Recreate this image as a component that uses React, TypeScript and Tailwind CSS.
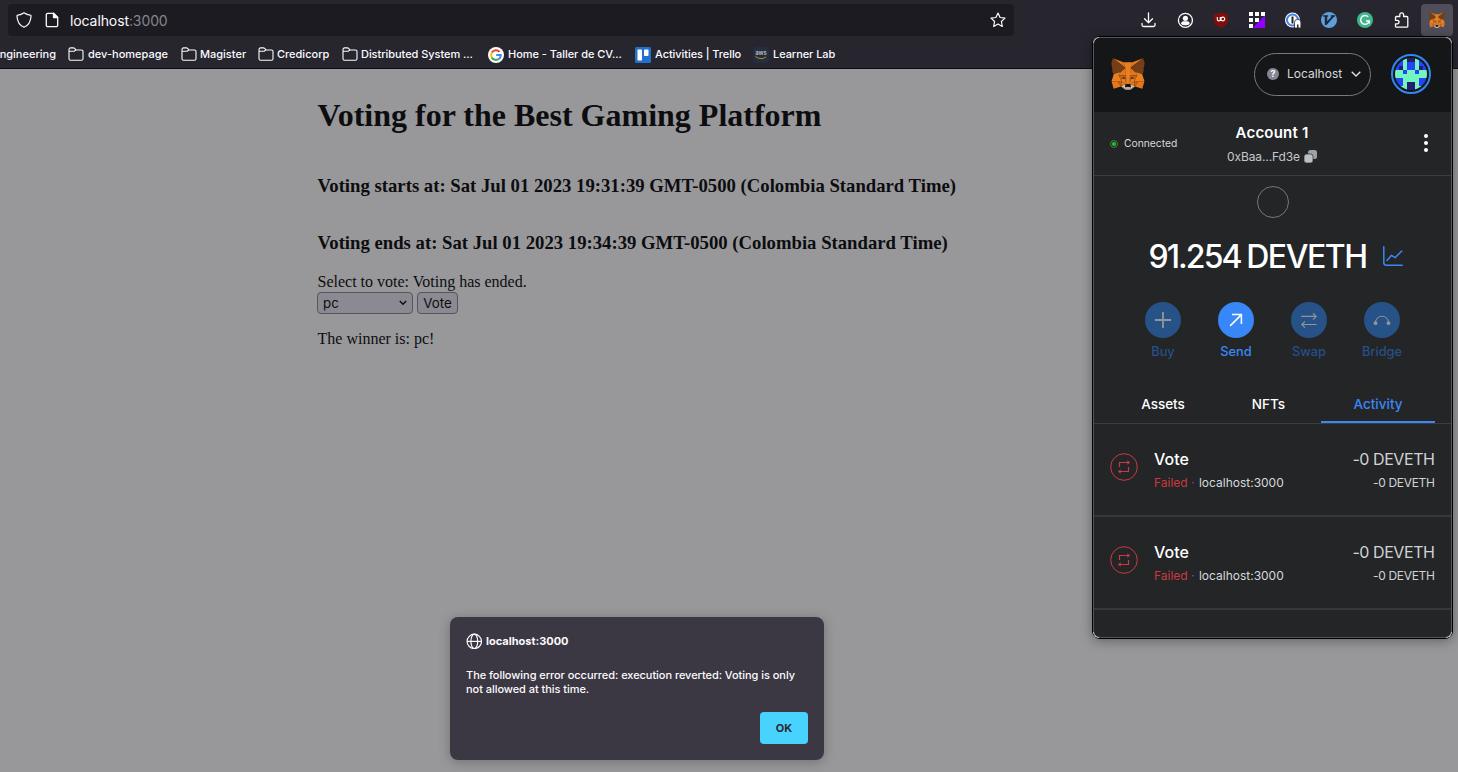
import React from "react";

const Fox = ({ className }: { className: string }) => (
  <svg viewBox="30 34 259 239" preserveAspectRatio="none" className={className}>
    <g fill="#e4761b">
      <path d="M274.1 35.5 174.6 109.4 193 65.8zM44.4 35.5 143.1 110.1 125.6 65.8zM238.3 206.8 211.8 247.4 268.5 263 284.8 207.7zM33.9 207.7 50.1 263 106.8 247.4 80.3 206.8z" />
      <path d="M103.6 138.2 87.8 162.1 144.1 164.6 142.1 104.1zM214.9 138.2 175.9 103.4 174.6 164.6 230.8 162.1zM106.8 247.4 140.6 230.9 111.4 208.1zM177.9 230.9 211.8 247.4 207.1 208.1z" />
    </g>
    <path fill="#d7c1b3" d="M211.8 247.4 177.9 230.9 180.6 253 180.3 262.3zM106.8 247.4 138.3 262.3 138.1 253 140.6 230.9z" />
    <path fill="#233447" d="M138.8 193.5 110.6 185.2 130.5 176.1zM179.7 193.5 188 176.1 208 185.2z" />
    <path fill="#cd6116" d="M106.8 247.4 111.6 206.8 80.3 207.7zM207 206.8 211.8 247.4 238.3 207.7zM230.8 162.1 174.6 164.6 179.8 193.5 188.1 176.1 208.1 185.2zM110.6 185.2 130.6 176.1 138.8 193.5 144.1 164.6 87.8 162.1z" />
    <path fill="#e4751f" d="M87.8 162.1 111.4 208.1 110.6 185.2zM208.1 185.2 207.1 208.1 230.8 162.1zM144.1 164.6 138.8 193.5 145.4 227.6 146.9 182.7zM174.6 164.6 171.9 182.6 173.1 227.6 179.8 193.5z" />
    <path fill="#e8801f" d="M179.8 193.5 173.1 227.6 177.9 230.9 207.1 208.1 208.1 185.2zM110.6 185.2 111.4 208.1 140.6 230.9 145.4 227.6 138.8 193.5z" />
    <path fill="#c0ad9e" d="M180.3 262.3 180.6 253 178.1 250.8 140.4 250.8 138.1 253 138.3 262.3 106.8 247.4 117.8 256.4 140.1 271.9 178.4 271.9 200.8 256.4 211.8 247.4z" />
    <path fill="#161616" d="M177.9 230.9 173.1 227.6 145.4 227.6 140.6 230.9 138.1 253 140.4 250.8 178.1 250.8 180.6 253z" />
    <path fill="#763d16" d="M278.3 114.2 286.8 73.4 274.1 35.5 177.9 106.9 214.9 138.2 267.2 153.5 278.8 140 273.8 136.4 281.8 129.1 275.6 124.3 283.6 118.2zM31.8 73.4 40.3 114.2 34.9 118.2 42.9 124.3 36.8 129.1 44.8 136.4 39.8 140 51.3 153.5 103.6 138.2 140.6 106.9 44.4 35.5z" />
    <path fill="#e8801f" d="M267.2 153.5 214.9 138.2 230.8 162.1 207.1 208.1 238.3 207.7 284.8 207.7zM103.6 138.2 51.3 153.5 33.9 207.7 80.3 207.7 111.4 208.1 87.8 162.1zM174.6 164.6 177.9 106.9 193.1 65.8 125.6 65.8 140.6 106.9 144.1 164.6 145.3 182.8 145.4 227.6 173.1 227.6 173.3 182.8z" />
  </svg>
);

const Folder = () => (
  <svg viewBox="0 0 16 16" className="size-4 shrink-0" fill="none" stroke="#fbfbfe" strokeWidth="1.1">
    <path d="M1 11.800V2.400A1.500 1.500 0 0 1 2.500.900h2.900c.5 0 .9.2 1.200.5l1.200 1.200c.2.2.5.4.8.4h4.900A1.500 1.500 0 0 1 15 4.500v7.300a1.500 1.500 0 0 1-1.500 1.500h-11A1.500 1.500 0 0 1 1 11.800zM1 4.300h5.200l1.600-1.300" />
  </svg>
);

const Slot = ({ children }: { children: React.ReactNode }) => (
  <div className="flex size-8 items-center justify-center">{children}</div>
);

const Toolbar = () => (
  <div className="flex gap-1">
    <Slot>
      <svg viewBox="0 0 16 16" className="size-4" fill="none" stroke="#fbfbfe" strokeWidth="1.3" strokeLinecap="round" strokeLinejoin="round">
        <path d="M7.500.800v9.700M3.500 6.800l4 4 4-4M1 11.500V13a1.500 1.500 0 0 0 1.500 1.500h10A1.500 1.500 0 0 0 14 13v-1.500" />
      </svg>
    </Slot>
    <Slot>
      <svg viewBox="0 0 16 16" className="size-4">
        <circle cx="8.400" cy="8.300" r="7" fill="none" stroke="#fbfbfe" strokeWidth="1.300" />
        <circle cx="8.400" cy="6.300" r="2.600" fill="#fbfbfe" />
        <path d="M4 12c.2-2 1.200-2.700 2.400-2.700h4c1.200 0 2.200.7 2.400 2.700a6 6 0 0 1-4.400 1.300A6 6 0 0 1 4 12z" fill="#fbfbfe" />
      </svg>
    </Slot>
    <Slot>
      <svg viewBox="0 0 16 16" className="size-4">
        <path d="M8 0c2 1.300 4 2 7 2.100v5.400C15 11.500 12.500 14 8 16 3.500 14 1 11.500 1 7.500V2.100C4 2 6 1.300 8 0z" fill="#800f0b" />
        <path d="M4.300 5v2.400a1.500 1.500 0 0 0 3 0V5M7.300 5v4M9.800 5.100a1.900 1.900 0 1 1 0 3.800 1.900 1.900 0 0 1 0-3.800z" fill="none" stroke="#fff" strokeWidth="1.100" />
      </svg>
    </Slot>
    <Slot>
      <svg viewBox="0 0 16 16" className="size-4">
        <path d="M0 0h4v4H0zM6 0h4v4H6zM12 0h4v4h-4zM0 6h4v4H0zM6 6h4v4H6zM0 12h4v4H0z" fill="#fff" />
        <path d="M16 3.500V16H3.500z" fill="#9400ff" />
      </svg>
    </Slot>
    <Slot>
      <svg viewBox="0 0 16 16" className="size-4">
        <circle cx="7.500" cy="8" r="7.500" fill="#fff" />
        <circle cx="7.500" cy="8" r="5.500" fill="#fff" stroke="#3c82e8" strokeWidth="2" />
        <path d="M6.500 4.500h2v7h-2z" fill="#25242c" />
        <path d="M9.500 16v-5.500a3.200 3.200 0 0 1 6.400 0V16z" fill="#fff" stroke="#25242c" strokeWidth=".8" />
        <path d="M12 12.500h1.500V16H12z" fill="#25242c" />
      </svg>
    </Slot>
    <Slot>
      <svg viewBox="0 0 16 16" className="size-4">
        <circle cx="8" cy="8" r="8" fill="#5ea0dc" />
        <path d="M2 3.300h5.200v1.200l-1 .2v4.600l4.300-4.600-.8-.2V3.300H14v1.200l-1.200.6L5.500 13H3.800V4.700L2 4.500z" fill="#1c2738" />
      </svg>
    </Slot>
    <Slot>
      <svg viewBox="0 0 16 16" className="size-4">
        <circle cx="8" cy="8" r="8" fill="#3fb68b" />
        <path d="M11.200 4.800A4.400 4.400 0 1 0 12.300 9H9M12.300 9v2.500" fill="none" stroke="#fff" strokeWidth="1.400" />
      </svg>
    </Slot>
    <Slot>
      <svg viewBox="0 0 16 16" className="size-4" fill="none" stroke="#fbfbfe" strokeWidth="1.300" strokeLinejoin="round">
        <path d="M2.500 5.500a1 1 0 0 1 1-1h3.300V2.800a1.900 1.900 0 0 1 3.800 0v1.700h3.200a1 1 0 0 1 1 1v8.700a1 1 0 0 1-1 1H3.500a1 1 0 0 1-1-1v-2.400h1.800a1.700 1.700 0 0 0 0-3.500H2.500z" />
      </svg>
    </Slot>
    <div className="flex size-8 items-center justify-center rounded-sm bg-[#504f59]">
      <Fox className="size-4" />
    </div>
  </div>
);

const Browser = () => (
  <header className="h-[69px] shrink-0 overflow-hidden border-b border-[#0c0c0d] bg-[#27262f] text-[#fbfbfe]">
    <div className="flex justify-between pt-1 pr-[5px] pl-2">
      <div className="flex h-8 w-[1006px] items-center rounded bg-[#1c1b22] pr-2 pl-2">
        <svg viewBox="0 0 16 16" className="size-4" fill="none" stroke="#fbfbfe" strokeWidth="1.200" strokeLinejoin="round">
          <path d="M8 .8c2 1.500 4 2.200 6.200 2.400.8 0 .9.500.8 1.300C14.600 10 12.500 13.500 8 15.300 3.500 13.500 1.400 10 1 4.500c0-.8 0-1.300.8-1.300C4 3 6 2.300 8 .8z" />
        </svg>
        <svg viewBox="0 0 16 16" className="ml-3 size-4" fill="none" stroke="#fbfbfe" strokeWidth="1.300" strokeLinejoin="round">
          <path d="M9.500 1.300H3.800a1.500 1.500 0 0 0-1.500 1.500v10.400a1.500 1.500 0 0 0 1.500 1.500h8.400a1.500 1.500 0 0 0 1.500-1.500V5.500z" />
          <path d="M9.500 1.300v4.200h4.200z" fill="#fbfbfe" />
        </svg>
        <span className="ml-[10px] pt-px text-[14px] tracking-[-0.1px]">localhost<span className="text-[#86858c]">:3000</span></span>
        <svg viewBox="0 0 16 16" className="ml-auto size-4" fill="none" stroke="#fbfbfe" strokeWidth="1.200" strokeLinejoin="round">
          <path d="m8 1 2.100 4.500 4.900.6-3.600 3.400.9 5L8 12l-4.300 2.500.9-5L1 6.100l4.900-.6z" />
        </svg>
      </div>
      <Toolbar />
    </div>
    <div className="flex h-7 items-center pt-[9px] text-[11px] font-medium whitespace-nowrap">
      <span className="-ml-[7px] w-[75px]">Engineering</span>
      <Folder /><span className="ml-1 w-[93px]">dev-homepage</span>
      <Folder /><span className="ml-[3px] w-[58px]">Magister</span>
      <Folder /><span className="ml-[3px] w-[65px]">Credicorp</span>
      <Folder /><span className="ml-[3px] w-[127px] tracking-[-0.050px]">Distributed System ...</span>
      <svg viewBox="0 0 16 16" className="size-4 shrink-0">
        <circle cx="8" cy="8" r="8" fill="#fff" />
        <g fill="none" strokeWidth="2">
          <path d="M11.600 4.800A4.800 4.800 0 0 0 3.800 5.600" stroke="#ea4335" />
          <path d="M3.800 5.600a4.800 4.800 0 0 0 0 4.800" stroke="#fbbc05" />
          <path d="M3.800 10.400a4.800 4.800 0 0 0 7.200 1.400" stroke="#34a853" />
          <path d="M11 11.800A4.500 4.500 0 0 0 12.800 8H8.200" stroke="#4285f4" />
        </g>
      </svg>
      <span className="ml-1 w-[127px] tracking-[-0.050px]">Home - Taller de CV...</span>
      <svg viewBox="0 0 16 16" className="size-4 shrink-0">
        <rect width="16" height="16" rx="1.500" fill="#2272cd" />
        <rect x="2.500" y="2.500" width="4.500" height="11" rx=".8" fill="#fff" />
        <rect x="9" y="2.500" width="4.500" height="6.500" rx=".8" fill="#fff" />
      </svg>
      <span className="ml-1 w-[98px] tracking-[-0.070px]">Activities | Trello</span>
      <div className="flex size-4 shrink-0 flex-col items-center rounded-sm bg-[#232f3e]">
        <span className="mt-[2px] text-[6px] leading-[7px] font-medium text-[#c8ccd2]">aws</span>
        <svg viewBox="0 0 12 4" className="h-1 w-3"><path d="M.5.500q5.500 4 10.500.5" fill="none" stroke="#c78322" strokeWidth="1" /></svg>
      </div>
      <span className="ml-1 tracking-[-0.070px]">Learner Lab</span>
    </div>
  </header>
);

const VotingPage = () => (
  <main className="flex-1 bg-[#98989a] pl-[317.500px] font-['Liberation_Serif',serif] text-[16px] leading-[18px] text-[#0d0d10]">
    <h1 className="pt-[28px] text-[32px] leading-[37px] font-bold">Voting for the Best Gaming Platform</h1>
    <h3 className="mt-[41px] text-[18.720px] leading-[22px] font-bold">Voting starts at: Sat Jul 01 2023 19:31:39 GMT-0500 (Colombia Standard Time)</h3>
    <h3 className="mt-[35px] text-[18.720px] leading-[22px] font-bold">Voting ends at: Sat Jul 01 2023 19:34:39 GMT-0500 (Colombia Standard Time)</h3>
    <p className="mt-[19px]">Select to vote: Voting has ended.</p>
    <div className="mt-px -ml-[0.500px] flex gap-1 font-['Inter',sans-serif] text-[13.300px]">
      <button className="flex h-[22px] w-24 items-center justify-between rounded border border-[#56555f] bg-[#8b8a92] pr-[5px] pl-[5px]">
        pc
        <svg viewBox="0 0 8 6" className="h-[6px] w-[8px]" fill="none" stroke="#0d0d10" strokeWidth="1.400"><path d="m.8 1 3.200 3.300L7.200 1" /></svg>
      </button>
      <button className="h-[22px] w-[41px] rounded border border-[#56555f] bg-[#8b8a92] leading-5">Vote</button>
    </div>
    <p className="mt-4">The winner is: pc!</p>
  </main>
);

const identicon = ["bbgddgbb", "bbgbbgbb", "bdgbbgdb", "ggbggbgg", "gggggggg", "bbggggbb", "bbgddgbb", "bggddggb"];
const identiconColors: Record<string, string> = { b: "#2544f5", d: "#231f70", g: "#72f5bf" };

const actions = [
  { label: "Buy", on: false, icon: <path d="M10 1v18M1 10h18" strokeWidth="2" /> },
  { label: "Send", on: true, icon: <path d="M3.500 16.500 16 4M5.500 4H16v10.500" strokeWidth="1.700" /> },
  { label: "Swap", on: false, icon: <path d="M1.500 6H18M14.500 2.500 18 6l-3.500 3.500M18.500 15H2M5.500 11.500 2 15l3.500 3.500" strokeWidth="1.200" /> },
  { label: "Bridge", on: false, icon: <><path d="M2.500 13a7.600 8.500 0 0 1 15 0" strokeWidth="1.300" /><circle cx="2.800" cy="13.500" r="1.700" fill="currentColor" strokeWidth="1" /><circle cx="17.200" cy="13.500" r="1.700" fill="currentColor" strokeWidth="1" /></> },
];

const Transaction = () => (
  <div className="flex h-[93px] border-b-2 border-[#37373f] pt-6 pr-4 pl-4">
    <svg viewBox="0 0 28 28" className="mt-[5px] size-7" fill="none" stroke="#ca3a41" strokeWidth="1">
      <circle cx="14" cy="14" r="13.300" />
      <path d="M9.500 14V9.500h9M18.500 14v4.500h-9" strokeWidth="1.200" />
      <path d="m17.500 7.500 2.500 2-2.500 2zM10.500 16.500l-2.500 2 2.500 2z" fill="#ca3a41" strokeWidth=".3" />
    </svg>
    <div className="ml-4 flex-1">
      <div className="text-[16px] leading-[22px] font-medium text-white">Vote</div>
      <div className="mt-[3px] text-[12px] leading-[20px] text-[#d6d9dc]"><span className="mr-px text-[#ca3a41]">Failed ·</span> localhost:3000</div>
    </div>
    <div className="text-right text-[#d0d3d6]">
      <div className="mr-[0.500px] text-[16px] leading-[22px] tracking-[-0.440px]">-0 DEVETH</div>
      <div className="mr-[0.500px] mt-[3px] text-[12px] leading-[20px] tracking-[-0.340px]">-0 DEVETH</div>
    </div>
  </div>
);

const Wallet = () => (
  <aside className="absolute top-9 left-[1092px] h-[603px] w-[361px] rounded-lg border border-black bg-[#232527] shadow-[0_2px_12px_rgba(0,0,0,0.35)]">
    <div className="h-full overflow-hidden rounded-[7px] border border-[#56565e]">
      <div className="flex h-[74px] items-center bg-[#141618] pb-[2px] pl-[16.500px]">
        <Fox className="h-[32px] w-[34px]" />
        <div className="ml-[109.500px] flex h-[43px] w-[117px] items-center rounded-full border border-[#777a84] pr-[9px] pl-3 text-[12px] text-[#d6d9dc]">
          <span className="flex size-3 items-center justify-center rounded-full bg-[#848691] text-[9px] leading-3 font-bold text-white">?</span>
          <span className="ml-2">Localhost</span>
          <svg viewBox="0 0 10 6" className="ml-auto h-[6px] w-[10px]" fill="none" stroke="#e0e2e5" strokeWidth="1.300"><path d="m.7.700 4.300 4.300L9.300.700" /></svg>
        </div>
        <div className="ml-5 flex size-10 items-center justify-center rounded-full border-2 border-[#3088f4]">
          <div className="grid size-8 grid-cols-8 overflow-hidden rounded-full">
            {identicon.join("").split("").map((c, i) => (
              <span key={i} className="size-1" style={{ backgroundColor: identiconColors[c] }} />
            ))}
          </div>
        </div>
      </div>
      <div className="flex h-16 items-center border-b border-[#3b3d42] pl-4">
        <svg viewBox="0 0 8 8" className="size-2"><circle cx="4" cy="4" r="3.500" fill="none" stroke="#2e9a34" strokeWidth=".9" /><circle cx="4" cy="4" r="2.100" fill="#38b53d" /></svg>
        <span className="ml-[6px] w-[90px] text-[10.300px] text-[#d6d9dc]">Connected</span>
        <div className="-ml-[12px] w-[140px] pt-[2px] text-center">
          <div className="text-[15px] leading-[22px] font-semibold tracking-[0.200px] text-white">Account 1</div>
          <div className="mt-[2px] flex items-center justify-center gap-1 text-[12px] leading-[22px] tracking-[-0.100px] text-[#c5c8cc]">
            0xBaa...Fd3e
            <svg viewBox="0 0 13 13" className="size-[13px]"><rect x="4" y="0" width="9" height="9" rx="2.500" fill="#9da1a6" /><rect x="0" y="4" width="9" height="9" rx="2.500" fill="#bbc0c5" stroke="#232527" strokeWidth=".7" /></svg>
          </div>
        </div>
        <svg viewBox="0 0 4 18" className="mr-[23px] mb-px ml-auto h-[18px] w-1" fill="#fff"><circle cx="2" cy="2" r="2" /><circle cx="2" cy="9" r="2" /><circle cx="2" cy="16" r="2" /></svg>
      </div>
      <div className="flex flex-col items-center pt-[10px]">
        <div className="size-8 rounded-full border border-[#74767e]" />
        <div className="mt-[19px] ml-[6px] flex items-center text-[32px] leading-[40px] font-medium tracking-[-1.450px] text-white">
          <span className="tracking-[-1.900px]">91.254</span>
          <span className="ml-[5.500px]">DEVETH</span>
          <svg viewBox="0 0 20 20" className="mb-[2px] ml-4 size-5" fill="none" stroke="#3b87f5" strokeWidth="1.500" strokeLinecap="round" strokeLinejoin="round"><path d="M.8.800v16a2.400 2.400 0 0 0 2.400 2.400h16M4 14.500l4.500-5.200 3.500 2.400L18.800 5" /></svg>
        </div>
      </div>
      <div className="mt-[25px] flex justify-center">
        {actions.map((a) => (
          <div key={a.label} className={a.on ? "flex w-[73px] flex-col items-center text-[#3b87f5]" : "flex w-[73px] flex-col items-center text-[#27508a]"}>
            <div className={a.on ? "flex size-9 items-center justify-center rounded-full bg-[#3787f8] text-white" : "flex size-9 items-center justify-center rounded-full bg-[#265287] text-[#92959a]"}>
              <svg viewBox="0 0 20 20" className="size-[18px]" fill="none" stroke="currentColor">{a.icon}</svg>
            </div>
            <span className="mt-1 text-[12.800px] leading-[20px] font-medium">{a.label}</span>
          </div>
        ))}
      </div>
      <div className="mt-6 flex h-[38px] border-b border-[#3b3d42] pr-4 pl-3 text-[13.500px] font-medium text-white">
        <span className="w-[114px] pt-2 text-center leading-[20px]">Assets</span>
        <span className="w-[97px] pt-2 text-center leading-[20px]">NFTs</span>
        <span className="ml-[4px] h-[37px] w-[114px] border-b-2 border-[#3b87f5] pt-2 text-center leading-[20px] text-[#3b87f5]">Activity</span>
      </div>
      <Transaction />
      <Transaction />
    </div>
    <span className="absolute top-0 left-0 size-[6px] rounded-tl-[6px] border-t border-l border-[#b9b9bc]" />
    <span className="absolute top-0 right-0 size-[6px] rounded-tr-[6px] border-t border-r border-[#b9b9bc]" />
    <span className="absolute bottom-0 left-0 size-[6px] rounded-bl-[6px] border-b border-l border-[#b9b9bc]" />
    <span className="absolute right-0 bottom-0 size-[6px] rounded-br-[6px] border-r border-b border-[#b9b9bc]" />
  </aside>
);

const Alert = () => (
  <div className="absolute top-[617px] left-[450px] flex h-[143px] w-[374px] flex-col rounded-lg bg-[#3b3843] px-4 pt-4 pb-4 text-[11px] leading-[14px] font-medium text-[#fbfbfe] shadow-[0_2px_12px_rgba(0,0,0,0.25)]">
    <div className="flex h-4 items-center gap-1 font-bold">
      <svg viewBox="0 0 16 16" className="size-4" fill="none" stroke="#fbfbfe" strokeWidth="1.200"><circle cx="8.300" cy="8.400" r="7.200" /><ellipse cx="8.300" cy="8.400" rx="3.400" ry="7.200" /><path d="M1.100 8.400h14.400" /></svg>
      localhost:3000
    </div>
    <p className="mt-[19px] tracking-[-0.050px] whitespace-nowrap">The following error occurred: execution reverted: Voting is only<br />not allowed at this time.</p>
    <button className="mt-auto h-8 w-12 self-end rounded bg-[#48d3ff] font-bold text-[#2b2a33]">OK</button>
  </div>
);

export default function App() {
  return (
    <div className="relative flex h-[772px] w-full flex-col overflow-hidden font-['Inter',sans-serif]">
      <Browser />
      <VotingPage />
      <Wallet />
      <Alert />
    </div>
  );
}
